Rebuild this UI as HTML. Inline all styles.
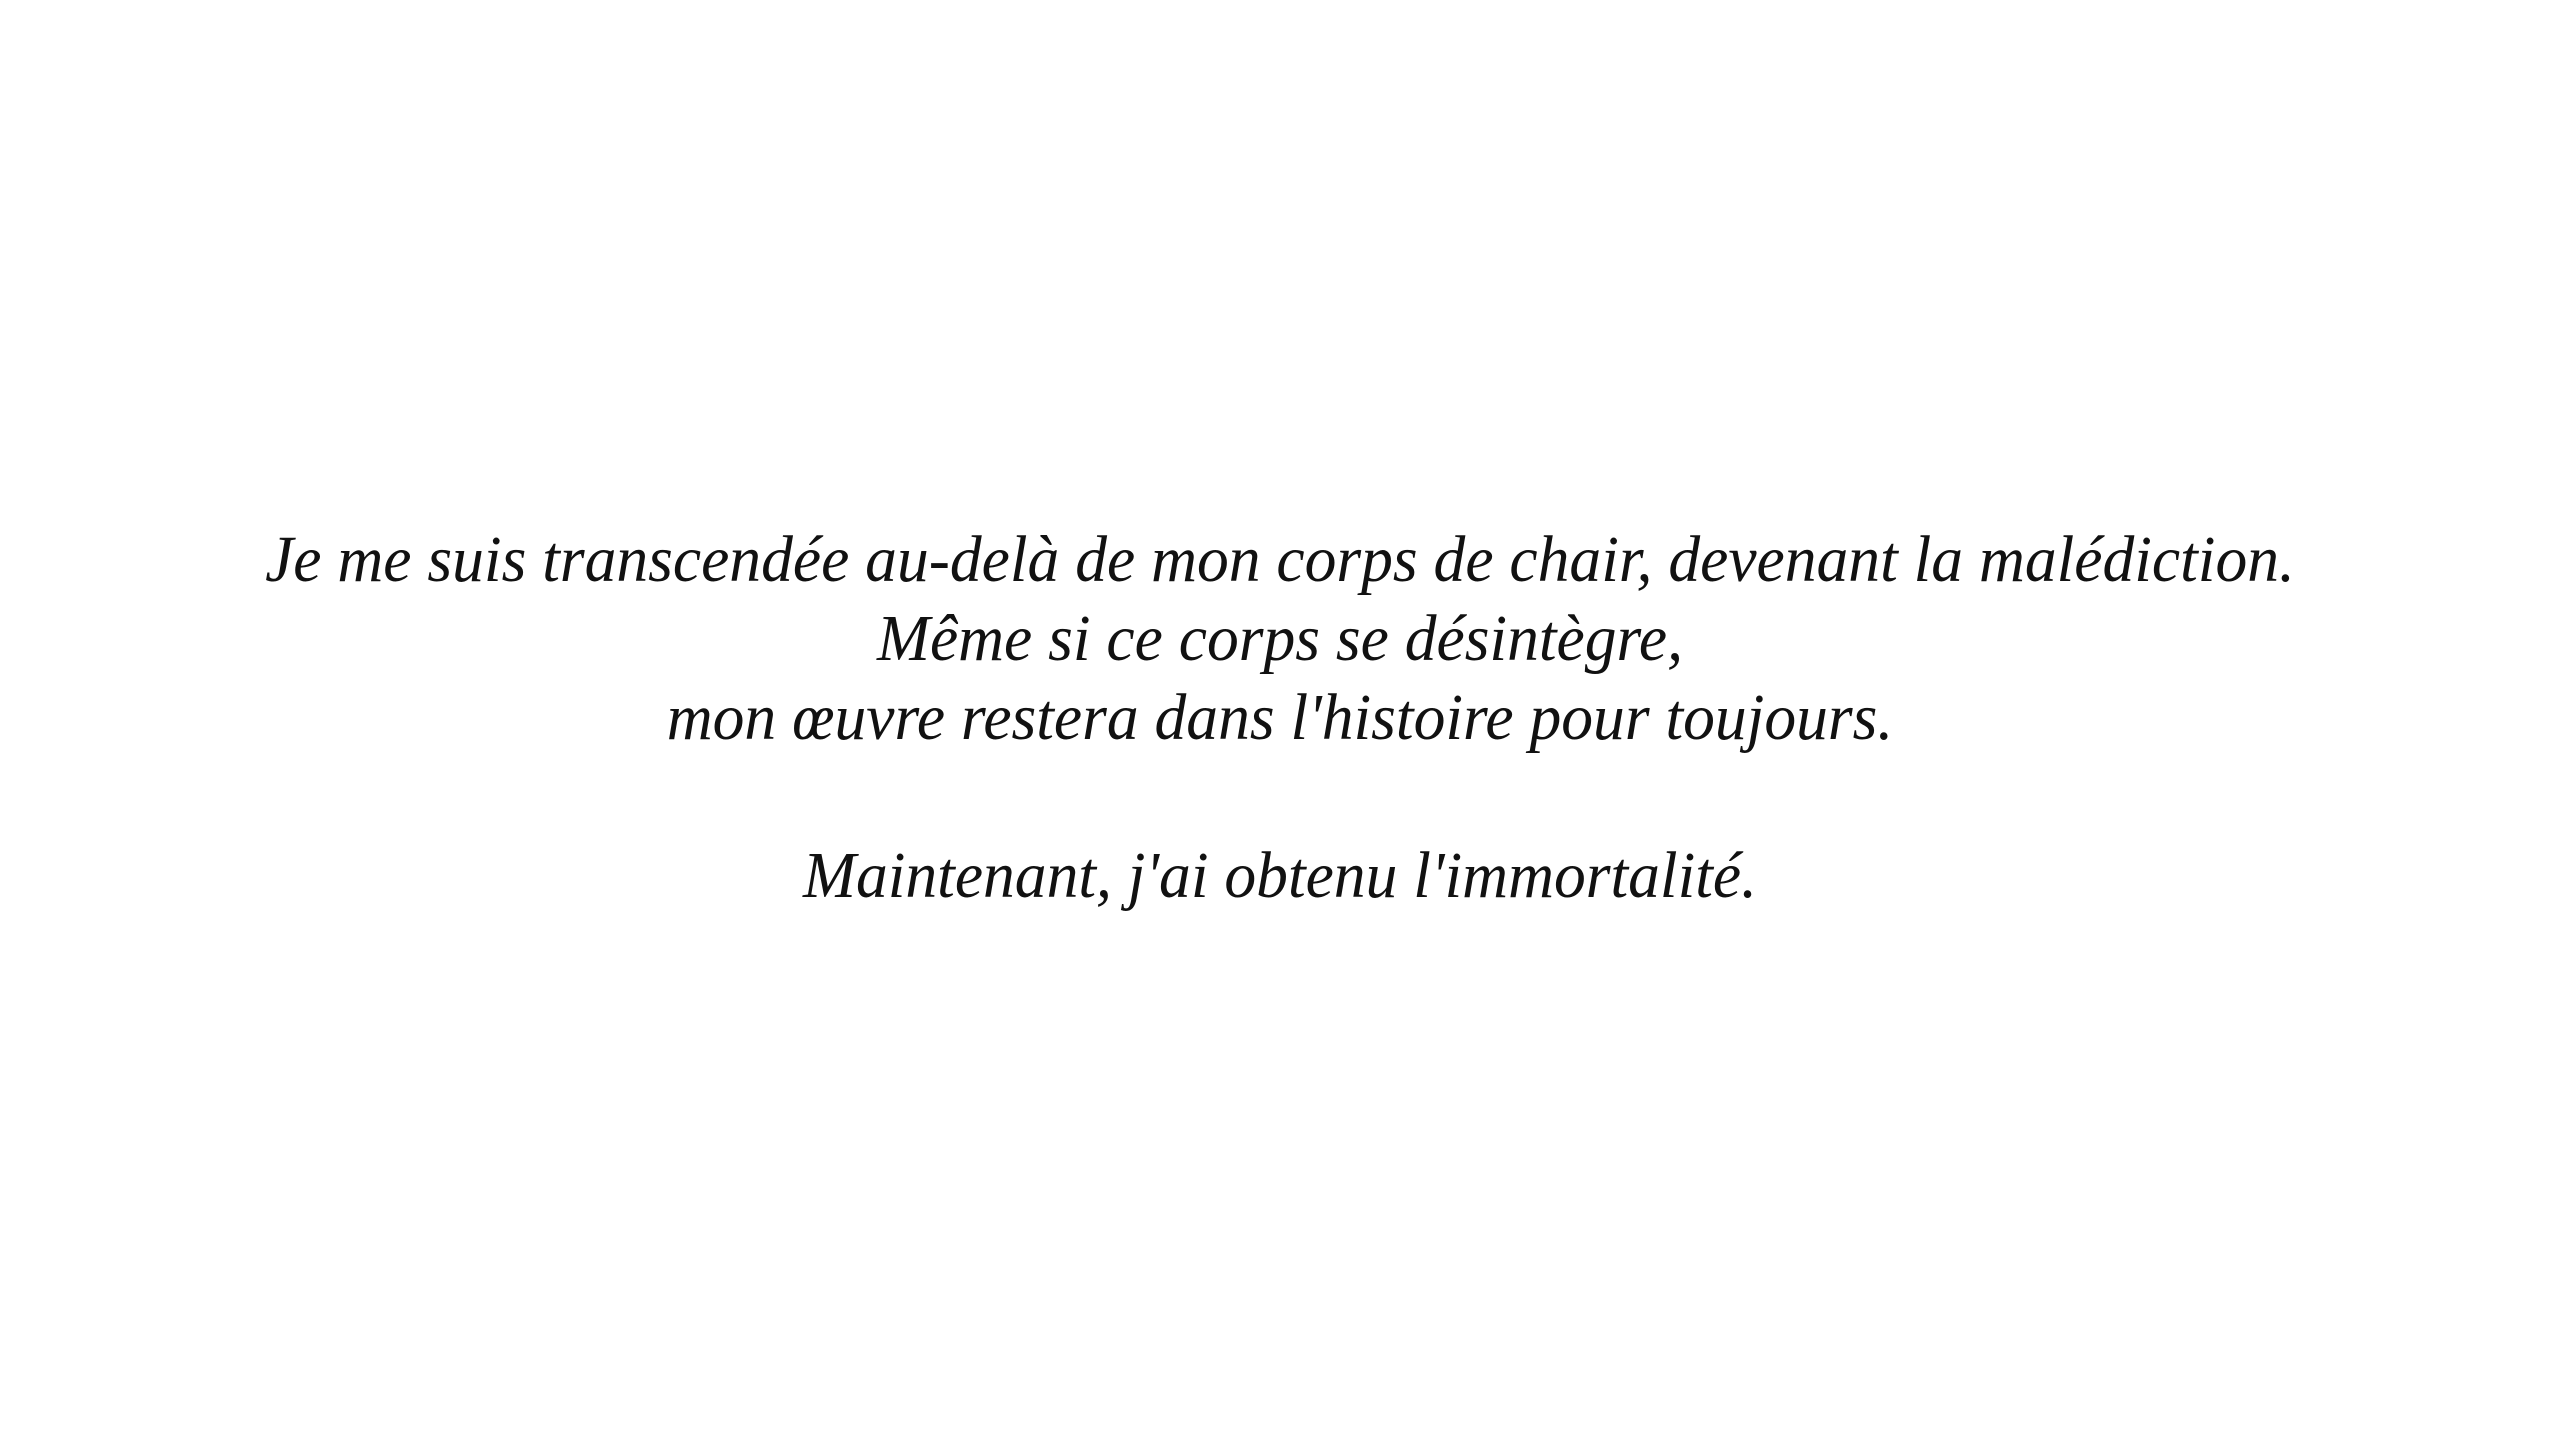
<!DOCTYPE html>
<html><head><meta charset="utf-8"><style>
html,body{margin:0;padding:0;background:#fff;width:2560px;height:1440px;overflow:hidden}
.t{position:absolute;left:0;width:2560px;top:520px;text-align:center;font-family:"Liberation Serif",serif;font-style:italic;font-size:66px;line-height:79px;color:#111;transform:scaleX(0.963);transform-origin:1280px 0}
</style></head><body>
<div class="t">Je me suis transcendée au-delà de mon corps de chair, devenant la malédiction.<br>Même si ce corps se désintègre,<br>mon œuvre restera dans l'histoire pour toujours.<br><br>Maintenant, j'ai obtenu l'immortalité.</div>
</body></html>
